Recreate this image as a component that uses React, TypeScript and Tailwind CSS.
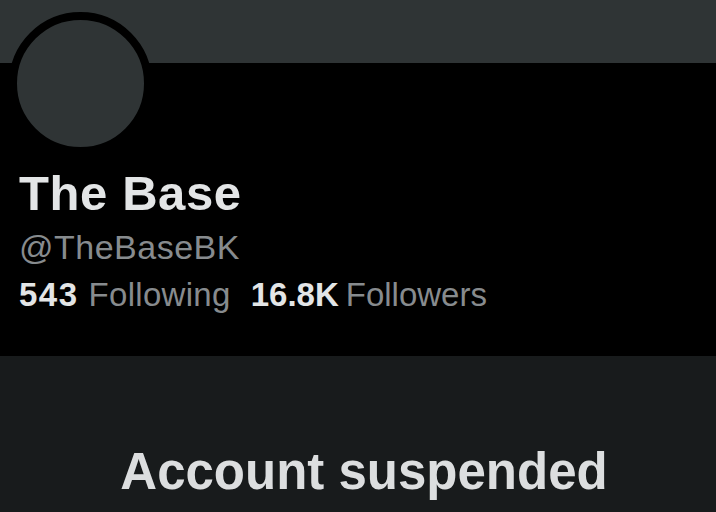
import React from "react";

export default function App() {
  const font = { fontFamily: '"Liberation Sans", Arial, sans-serif' };
  return (
    <div className="w-[716px] h-[512px] overflow-hidden bg-[#181b1c] flex flex-col" style={font}>
      <div className="h-[63px] bg-[#2f3435] shrink-0" />
      <div className="relative bg-black h-[293px] shrink-0 pt-[106px] pl-[19px]">
        <div className="absolute left-[9px] top-[-51px] w-[143px] h-[143px] rounded-full border-[8px] border-black bg-[#2f3435]" />
        <div className="text-[49px] leading-none font-bold text-[#e3e5e6] tracking-[0.6px]">The Base</div>
        <div className="mt-[12px] text-[34px] leading-none text-[#878b8e] tracking-[0.5px]">@TheBaseBK</div>
        <div className="mt-[14px] text-[33px] leading-none flex">
          <span className="font-bold text-[#e3e5e6] tracking-[1.5px]">543</span>
          <span className="text-[#878b8e] ml-[10px] tracking-[0.3px]">Following</span>
          <span className="font-bold text-[#e3e5e6] ml-[20px]">16.8K</span>
          <span className="text-[#878b8e] ml-[7px]">Followers</span>
        </div>
      </div>
      <div className="pt-[90px] flex justify-center pl-[12px]">
        <div className="text-[51px] leading-none font-bold text-[#dcdedf]">Account suspended</div>
      </div>
    </div>
  );
}
